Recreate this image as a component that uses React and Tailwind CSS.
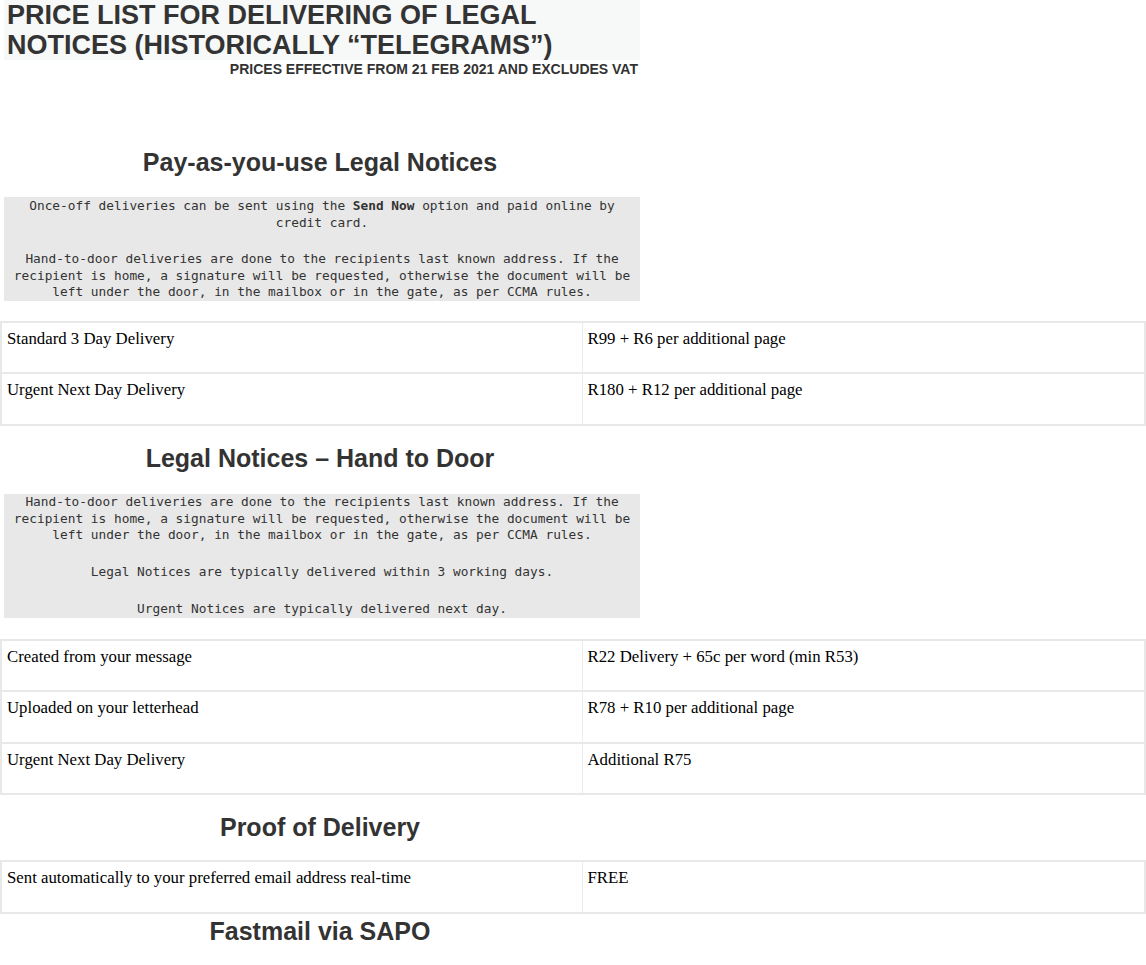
import React from "react";

function Heading({ children, className = "" }) {
  return (
    <h2
      className={`w-[640px] text-center text-[25px] leading-[28px] font-bold text-[#333] font-['Liberation_Sans',Arial,sans-serif] ${className}`}
    >
      {children}
    </h2>
  );
}

function Note({ children, className = "" }) {
  return (
    <div
      className={`ml-[4px] w-[636px] bg-[#e8e8e8] text-center text-[12.8px] leading-[16.6px] text-[#333] font-['DejaVu_Sans_Mono',monospace] ${className}`}
    >
      {children}
    </div>
  );
}

function PriceTable({ rows, className = "" }) {
  return (
    <table
      className={`w-full border-collapse border-2 border-[#e8e8e8] text-[16.8px] leading-[20px] text-black font-['Liberation_Serif','Times_New_Roman',serif] ${className}`}
    >
      <tbody>
        {rows.map(([label, price], i) => (
          <tr key={i} className="h-[51.5px] border-b-2 border-[#e8e8e8]">
            <td className="w-[581px] border-r border-[#ececec] align-top px-[5px] pt-[6px]">{label}</td>
            <td className="align-top px-[5px] pt-[6px]">{price}</td>
          </tr>
        ))}
      </tbody>
    </table>
  );
}

export default function App() {
  return (
    <div className="min-h-screen bg-white pb-10">
      {/* Title */}
      <div className="ml-[4px] w-[636px] bg-[#f7f8f8] px-[3px]">
        <h1 className="text-[27px] leading-[30px] font-bold text-[#333] font-['Liberation_Sans',Arial,sans-serif]">
          PRICE LIST FOR DELIVERING OF LEGAL NOTICES (HISTORICALLY “TELEGRAMS”)
        </h1>
      </div>
      <p className="w-[638px] text-right text-[14px] leading-[16px] font-bold text-[#333] mt-[1px] font-['Liberation_Sans',Arial,sans-serif]">
        PRICES EFFECTIVE FROM 21 FEB 2021 AND EXCLUDES VAT
      </p>

      {/* Pay-as-you-use */}
      <Heading className="mt-[71px] mb-[21px]">Pay-as-you-use Legal Notices</Heading>
      <Note className="pt-[1px]">
        <p>
          Once-off deliveries can be sent using the <strong>Send Now</strong> option and paid online by credit card.
        </p>
        <p className="mt-[20px]">
          Hand-to-door deliveries are done to the recipients last known address. If the recipient is home, a signature
          will be requested, otherwise the document will be left under the door, in the mailbox or in the gate, as per
          CCMA rules.
        </p>
      </Note>
      <PriceTable
        className="mt-[20px]"
        rows={[
          ["Standard 3 Day Delivery", "R99 + R6 per additional page"],
          ["Urgent Next Day Delivery", "R180 + R12 per additional page"],
        ]}
      />

      {/* Hand to Door */}
      <Heading className="mt-[18px] mb-[22px]">Legal Notices – Hand to Door</Heading>
      <Note>
        <p>
          Hand-to-door deliveries are done to the recipients last known address. If the recipient is home, a signature
          will be requested, otherwise the document will be left under the door, in the mailbox or in the gate, as per
          CCMA rules.
        </p>
        <p className="mt-[20px]">Legal Notices are typically delivered within 3 working days.</p>
        <p className="mt-[21px]">Urgent Notices are typically delivered next day.</p>
      </Note>
      <PriceTable
        className="mt-[21px]"
        rows={[
          ["Created from your message", "R22 Delivery + 65c per word (min R53)"],
          ["Uploaded on your letterhead", "R78 + R10 per additional page"],
          ["Urgent Next Day Delivery", "Additional R75"],
        ]}
      />

      {/* Proof of Delivery */}
      <Heading className="mt-[18px] mb-[19px]">Proof of Delivery</Heading>
      <PriceTable rows={[["Sent automatically to your preferred email address real-time", "FREE"]]} />

      {/* Fastmail */}
      <Heading className="mt-[3px]">Fastmail via SAPO</Heading>
    </div>
  );
}
